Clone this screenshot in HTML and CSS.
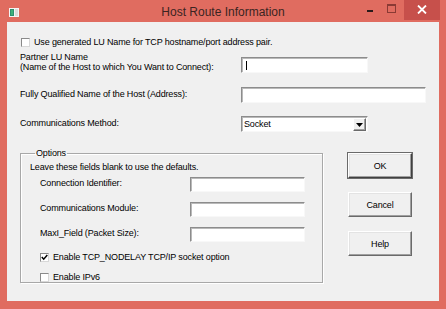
FILE: index.html
```html
<!DOCTYPE html>
<html lang="en">
<head>
  <meta charset="UTF-8">
  <meta name="viewport" content="width=device-width, initial-scale=1.0">
  <title>Host Route Information</title>
  <link rel="stylesheet" href="styles.css">
</head>
<body>
  <div class="window">
    <div class="titlebar">
      <div class="title-left">
        <svg class="app-icon" width="10" height="9" viewBox="0 0 10 9">
          <rect x="0" y="0" width="10" height="9" fill="#f4f4f4"/>
          <rect x="1" y="1" width="4" height="7" fill="#2f8f6f"/>
          <rect x="2" y="2" width="2" height="5" fill="#3fb07a"/>
          <rect x="6" y="1" width="3" height="7" fill="#dcdcdc"/>
        </svg>
      </div>
      <div class="title">Host Route Information</div>
      <div class="caption-buttons">
        <span class="cap-min"></span>
        <span class="cap-max"></span>
        <span class="cap-close">
          <svg width="10" height="9" viewBox="0 0 10 9">
            <path d="M1 0.5 L9 8.5 M9 0.5 L1 8.5" stroke="#fff" stroke-width="1.8"/>
          </svg>
        </span>
      </div>
    </div>

    <div class="client">
      <div class="check top-check">
        <span class="box"></span>
        <span>Use generated LU Name for TCP hostname/port address pair.</span>
      </div>

      <div class="form">
        <div class="row row-partner">
          <div class="label two-line">Partner LU Name<br>(Name of the Host to which You Want to Connect):</div>
          <div class="edit short"><span class="caret"></span></div>
        </div>
        <div class="row row-host">
          <div class="label">Fully Qualified Name of the Host (Address):</div>
          <div class="edit long"></div>
        </div>
        <div class="row row-method">
          <div class="label">Communications Method:</div>
          <div class="combo">
            <span class="combo-text">Socket</span>
            <span class="combo-arrow">
              <svg width="7" height="4" viewBox="0 0 7 4"><path d="M0 0 H7 L3.5 4 Z" fill="#000"/></svg>
            </span>
          </div>
        </div>
      </div>

      <div class="lower">
        <fieldset class="options">
          <legend>Options</legend>
          <div class="hint">Leave these fields blank to use the defaults.</div>
          <div class="opt-row">
            <div class="opt-label">Connection Identifier:</div>
            <div class="edit opt"></div>
          </div>
          <div class="opt-row">
            <div class="opt-label">Communications Module:</div>
            <div class="edit opt"></div>
          </div>
          <div class="opt-row">
            <div class="opt-label">MaxI_Field (Packet Size):</div>
            <div class="edit opt"></div>
          </div>
          <div class="check opt-check">
            <span class="box">
              <svg width="7" height="7" viewBox="0 0 7 7"><path d="M0.8 3 L2.7 5.2 L6.3 0.9" stroke="#000" stroke-width="1.5" fill="none"/></svg>
            </span>
            <span>Enable TCP_NODELAY TCP/IP socket option</span>
          </div>
          <div class="check opt-check">
            <span class="box"></span>
            <span>Enable IPv6</span>
          </div>
        </fieldset>

        <div class="buttons">
          <button class="btn btn-default">OK</button>
          <button class="btn">Cancel</button>
          <button class="btn">Help</button>
        </div>
      </div>
    </div>
  </div>
</body>
</html>
```

FILE: styles.css
```css
body {
  margin: 0;
  font-family: 'Liberation Sans', Arial, sans-serif;
  font-size: 9px;
  letter-spacing: -0.15px;
  color: #000;
}

.window {
  width: 446px;
  height: 309px;
  background: #e06c60; /* Windows 8 red frame */
  box-sizing: border-box;
}

/* Title bar */
.titlebar {
  height: 22px;
  display: grid;
  grid-template-columns: 1fr auto 1fr;
  align-items: start;
}

.title-left {
  padding: 8px 0 0 9px;
}

.app-icon {
  display: block;
}

.title {
  font-size: 12px;
  letter-spacing: 0;
  line-height: 14px;
  padding-top: 5px;
  color: #3b2422;
}

.caption-buttons {
  display: flex;
  justify-content: flex-end;
  align-items: flex-start;
  padding-right: 6px;
}

.cap-min {
  width: 6px;
  height: 2px;
  background: #2a1a1a;
  margin: 10px 14px 0 0;
}

.cap-max {
  width: 7px;
  height: 6px;
  border: 1px solid #8a3a34;
  border-top-width: 2px;
  margin: 4px 8px 0 0;
}

.cap-close {
  width: 36px;
  height: 20px;
  background: #c7504b;
  display: flex;
  justify-content: center;
  align-items: center;
  padding-bottom: 2px;
  box-sizing: border-box;
}

.cap-close svg {
  display: block;
}

/* Client area */
.client {
  margin: 0 7px;
  height: 279px;
  background: #f0f0f0;
  padding: 14px 0 0 13px;
  box-sizing: border-box;
}

.check {
  display: flex;
  align-items: center;
  gap: 4px;
  height: 12px;
  white-space: nowrap;
}

.box {
  width: 7px;
  height: 7px;
  background: #fff;
  border: 1px solid #8a8a8a;
  border-right-color: #d8d8d8;
  border-bottom-color: #d8d8d8;
  display: flex;
  align-items: center;
  justify-content: center;
}

.box svg {
  display: block;
}

.top-check {
  margin-left: 1px;
}

/* Upper form */
.form {
  margin-top: 4px;
}

.row {
  display: flex;
  align-items: center;
}

.label {
  width: 221px;
  flex: none;
  white-space: nowrap;
}

.two-line {
  line-height: 10px;
  align-self: flex-start;
}

.row-partner {
  height: 21px;
}

.row-partner .edit {
  align-self: flex-end;
}

.row-host {
  margin-top: 14px;
}

.row-method {
  margin-top: 13px;
}

.row-host .label,
.row-method .label {
  padding-bottom: 3px;
}

.edit {
  height: 16px;
  background: #fff;
  border: 1px solid;
  border-color: #8c8c8c #f8f8f8 #f8f8f8 #8c8c8c;
  box-shadow: inset 1px 1px #b9b9b9;
  box-sizing: border-box;
  position: relative;
}

.edit.short {
  width: 127px;
}

.edit.long {
  width: 185px;
}

.caret {
  position: absolute;
  left: 4px;
  top: 3px;
  width: 1px;
  height: 9px;
  background: #000;
}

.combo {
  width: 127px;
  height: 16px;
  background: #fff;
  border: 1px solid;
  border-color: #8c8c8c #f8f8f8 #f8f8f8 #8c8c8c;
  box-shadow: inset 1px 1px #b9b9b9;
  box-sizing: border-box;
  display: flex;
  align-items: center;
  padding: 0 1px 0 2px;
}

.combo-text {
  flex: 1;
}

.combo-arrow {
  width: 13px;
  height: 13px;
  margin-top: 1px;
  background: #f0f0f0;
  border: 1px solid;
  border-color: #fff #6a6a6a #6a6a6a #fff;
  box-shadow: inset -1px -1px #a0a0a0;
  box-sizing: border-box;
  display: flex;
  align-items: center;
  justify-content: center;
}

.combo-arrow svg {
  display: block;
}

/* Lower part */
.lower {
  display: flex;
  align-items: flex-start;
  margin-top: 16px;
}

.options {
  width: 303px;
  height: 135px;
  margin: 0;
  padding: 3px 0 0 9px;
  border: 1px solid #a8a8a8;
  box-shadow: inset 1px 1px #fff, 1px 1px #fff;
  box-sizing: border-box;
}

.options legend {
  padding: 0 1px;
  margin-left: 5px;
  line-height: 11px;
}

.hint {
  height: 11px;
  line-height: 11px;
  white-space: nowrap;
}

.opt-row {
  display: flex;
  align-items: center;
  margin-left: 10px;
  height: 16px;
  margin-top: 9px;
}

.hint + .opt-row {
  margin-top: 3px;
}

.opt-label {
  width: 150px;
  flex: none;
  padding-bottom: 3px;
  white-space: nowrap;
}

.edit.opt {
  width: 115px;
  height: 15px;
}

.opt-check {
  margin-left: 10px;
  margin-top: 9px;
}

.opt-check + .opt-check {
  margin-top: 8px;
}

.buttons {
  display: flex;
  flex-direction: column;
  gap: 14px;
  margin: 5px 0 0 25px;
}

.btn {
  width: 64px;
  height: 25px;
  padding: 0;
  font-family: 'Liberation Sans', Arial, sans-serif;
  font-size: 9px;
  letter-spacing: -0.15px;
  color: #000;
  background: #f0f0f0;
  border: 1px solid;
  border-color: #fff #6a6a6a #6a6a6a #fff;
  box-shadow: inset -1px -1px #a0a0a0, inset 1px 1px #e3e3e3;
}

.btn-default {
  outline: 1px solid #6a6a6a;
  outline-offset: 0;
  border-color: #fff #404040 #404040 #fff;
}
```
